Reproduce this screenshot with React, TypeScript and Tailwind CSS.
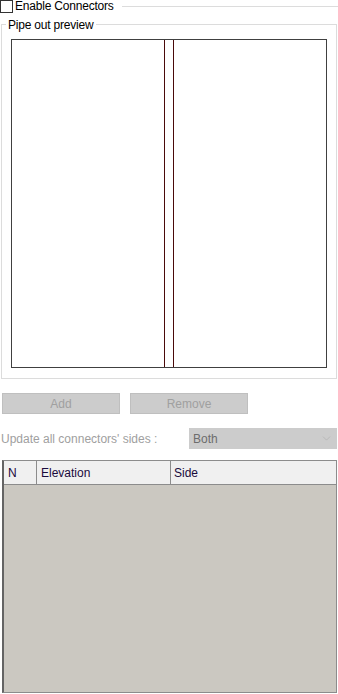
import React from 'react';
import { ChevronDown } from 'lucide-react';

const font = "font-['Segoe_UI','Liberation_Sans',Arial,sans-serif]";

function PreviewCanvas() {
  return (
    <div className="relative mx-[9px] mt-[14px] h-[329px] border border-[#404040] bg-white">
      <div className="absolute top-0 bottom-0 left-[152px] w-[1px] bg-[#4a0a0a]" />
      <div className="absolute top-0 bottom-0 left-[161px] w-[1px] bg-[#4a0a0a]" />
    </div>
  );
}

export default function App() {
  return (
    <div className={`${font} w-[338px] h-[694px] bg-white text-[12px] text-black overflow-hidden relative`}>
      {/* header with checkbox */}
      <div className="flex items-center h-[13px]">
        <div className="w-[13px] h-[13px] border border-[#333] bg-white shrink-0" />
        <span className="ml-[2px] leading-[13px] tracking-[-0.2px]">Enable Connectors</span>
        <div className="flex-1 ml-[8px] h-[1px] bg-[#dcdcdc]" />
      </div>

      {/* group box */}
      <div className="relative mt-[11px] ml-[1px] w-[336px] h-[355px] border border-[#dcdcdc]">
        <span className="absolute -top-[7px] left-[4px] bg-white px-[2px] leading-[14px] tracking-[-0.2px]">Pipe out preview</span>
        <PreviewCanvas />
      </div>

      {/* buttons */}
      <div className="flex gap-[10px] mt-[14px] ml-[2px]">
        <div className="w-[118px] h-[21px] bg-[#cccccc] border border-[#bfbfbf] flex items-center justify-center text-[#a0a0a0]">Add</div>
        <div className="w-[118px] h-[21px] bg-[#cccccc] border border-[#bfbfbf] flex items-center justify-center text-[#a0a0a0]">Remove</div>
      </div>

      {/* update sides */}
      <div className="flex items-center mt-[14px] h-[21px]">
        <span className="ml-[1px] w-[188px] text-[#a0a0a0]">Update all connectors' sides :</span>
        <div className="w-[148px] h-[21px] bg-[#cccccc] border border-[#cccccc] flex items-center justify-between pl-[3px] pr-[3px] text-[#6d6d6d]">
          <span>Both</span>
          <ChevronDown size={13} strokeWidth={1} className="text-[#a8a8a8]" />
        </div>
      </div>

      {/* table */}
      <div className="mt-[11px] ml-[2px] w-[335px] h-[233px] border border-[#8c8c8c] border-l-[2px] border-l-[#646464] bg-[#cbc8c1] flex flex-col">
        <div className="flex h-[24px] bg-[#f0f0f0] border-b border-[#8c8c8c]">
          <div className="w-[33px] border-r border-[#8c8c8c] pl-[4px] flex items-center text-[#1a0a3c]">N</div>
          <div className="w-[134px] border-r border-[#8c8c8c] pl-[4px] flex items-center text-[#1a0a3c]">Elevation</div>
          <div className="flex-1 pl-[3px] flex items-center text-[#1a0a3c]">Side</div>
        </div>
      </div>
    </div>
  );
}
